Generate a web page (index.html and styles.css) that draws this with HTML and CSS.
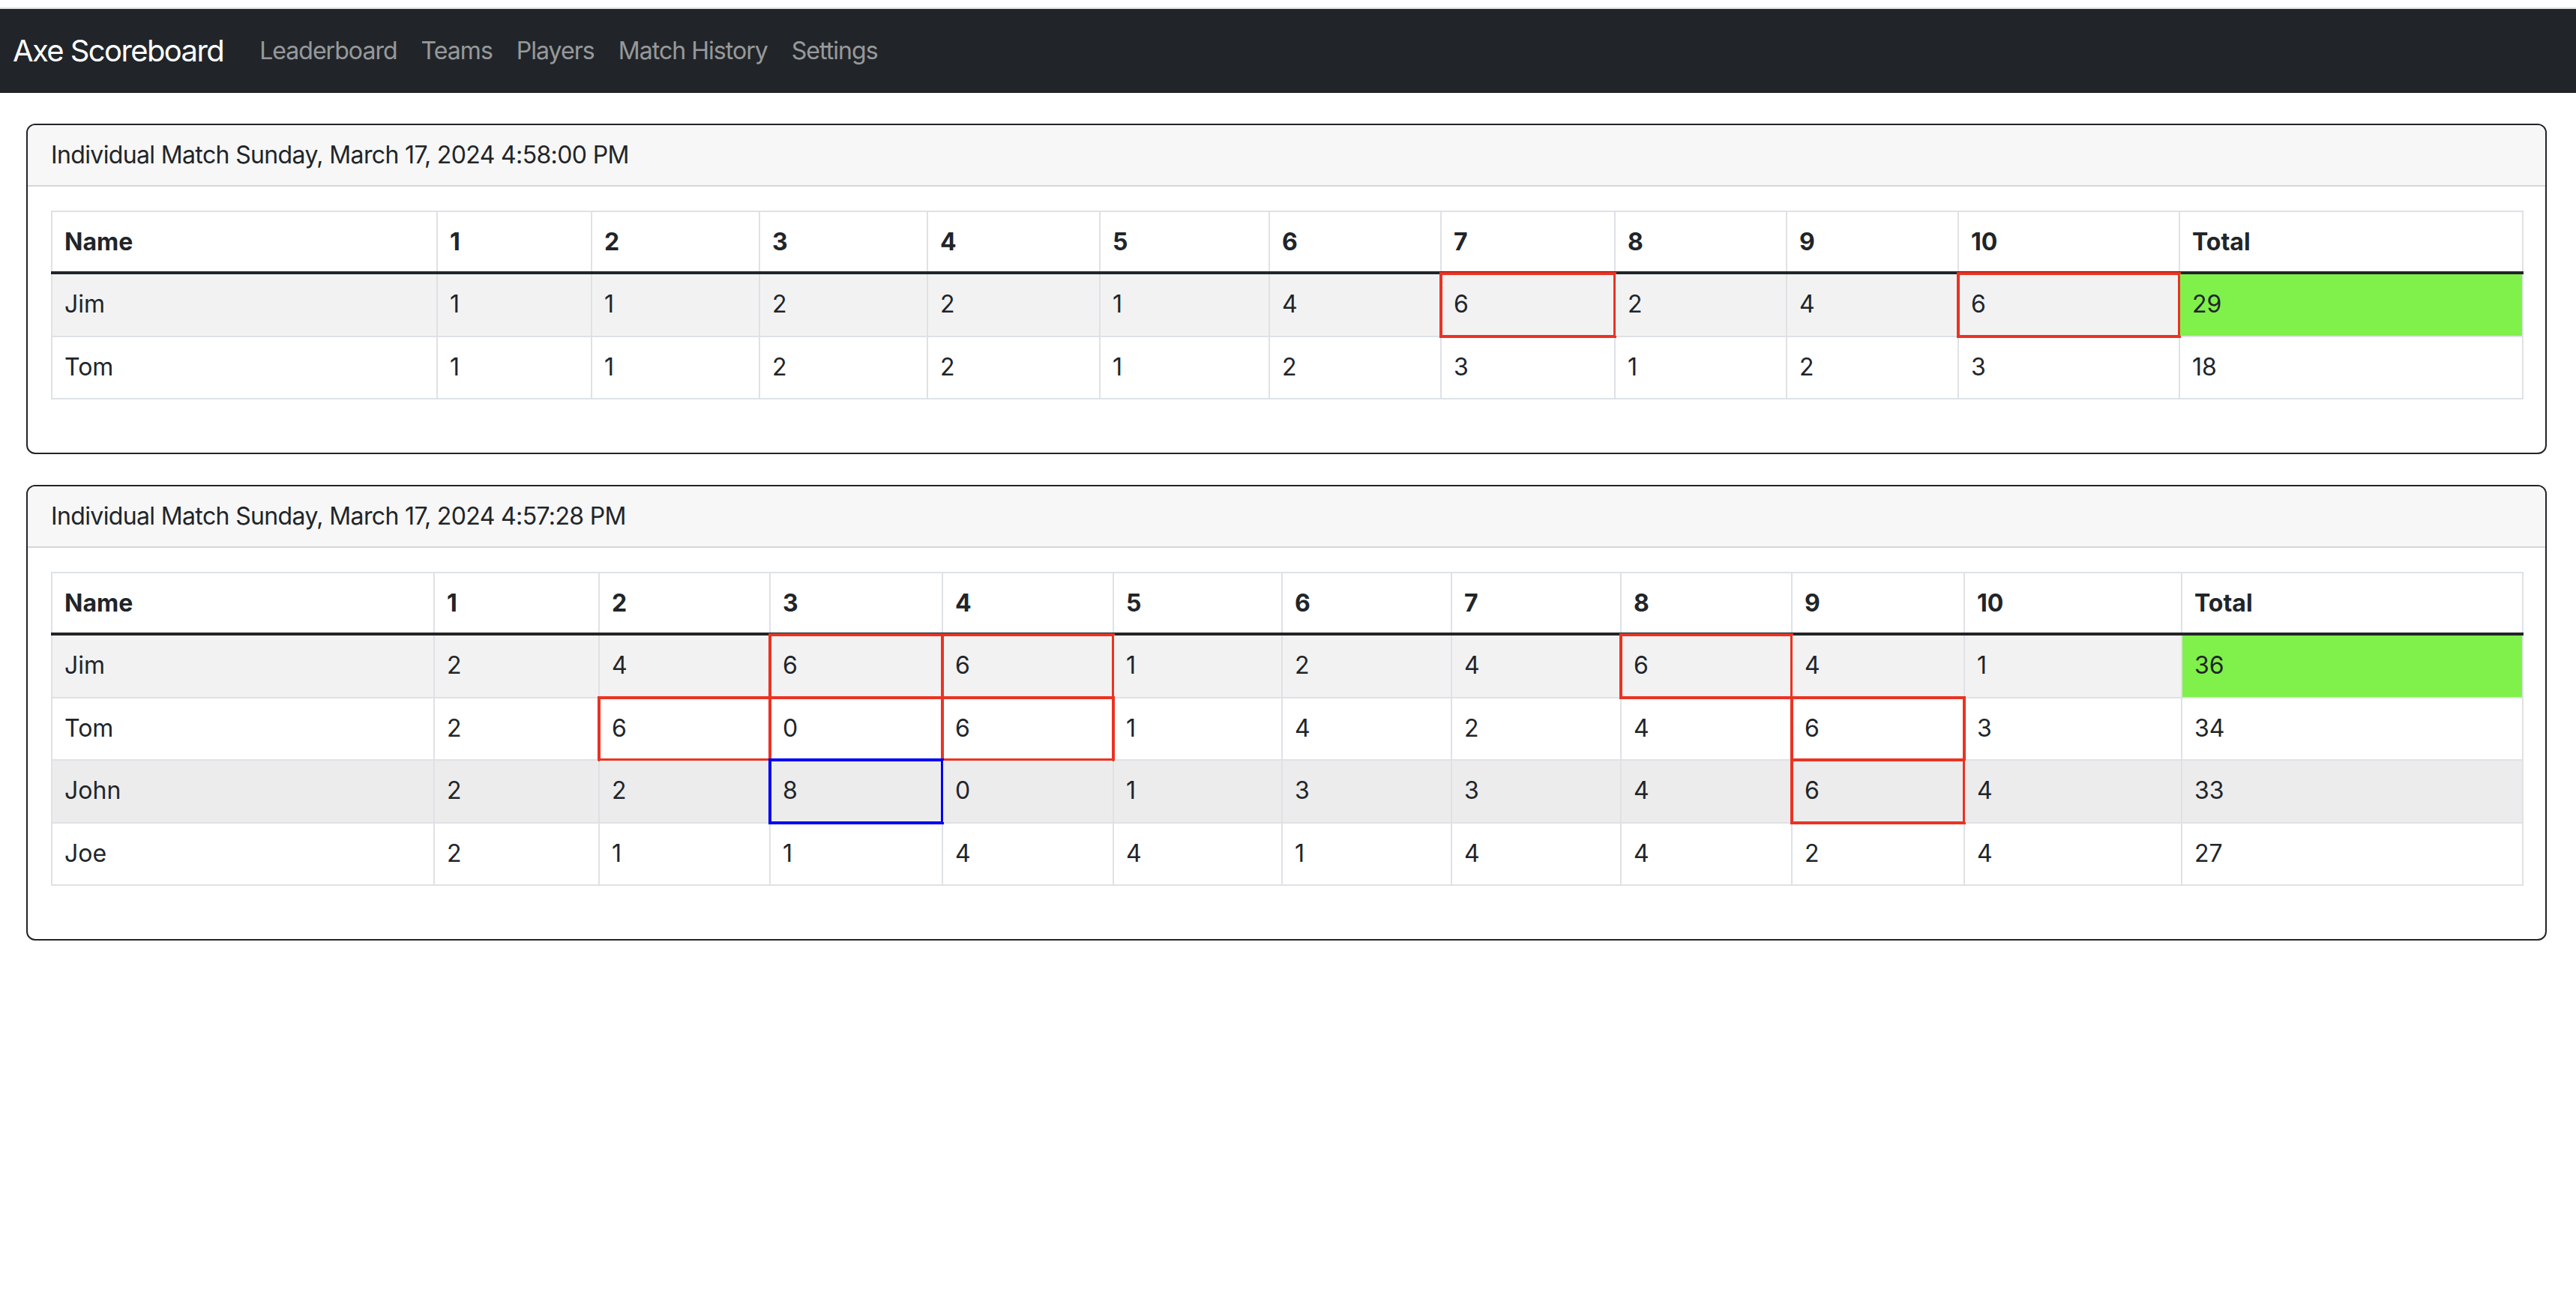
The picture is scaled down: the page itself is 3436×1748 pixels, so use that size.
FILE: index.html
```html
<!DOCTYPE html>
<html lang="en">
<head>
<meta charset="utf-8">
<title>Axe Scoreboard</title>
<link rel="stylesheet" href="styles.css">
</head>
<body>
<nav class="navbar">
  <a class="brand" href="#">Axe Scoreboard</a>
  <ul class="nav">
    <li><a href="#">Leaderboard</a></li>
    <li><a href="#">Teams</a></li>
    <li><a href="#">Players</a></li>
    <li><a href="#">Match History</a></li>
    <li><a href="#">Settings</a></li>
  </ul>
</nav>

<main class="content">
  <section class="card">
    <div class="card-header">Individual Match Sunday, March 17, 2024 4:58:00 PM</div>
    <div class="card-body">
      <table class="score t1">
        <colgroup>
          <col class="c0"><col class="c1"><col class="c2"><col class="c3"><col class="c4"><col class="c5"><col class="c6"><col class="c7"><col class="c8"><col class="c9"><col class="c10"><col class="c11">
        </colgroup>
        <thead>
          <tr><th>Name</th><th>1</th><th>2</th><th>3</th><th>4</th><th>5</th><th>6</th><th>7</th><th>8</th><th>9</th><th>10</th><th>Total</th></tr>
        </thead>
        <tbody>
          <tr class="striped"><td>Jim</td><td>1</td><td>1</td><td>2</td><td>2</td><td>1</td><td>4</td><td class="hit">6</td><td>2</td><td>4</td><td class="hit">6</td><td class="winner">29</td></tr>
          <tr><td>Tom</td><td>1</td><td>1</td><td>2</td><td>2</td><td>1</td><td>2</td><td>3</td><td>1</td><td>2</td><td>3</td><td>18</td></tr>
        </tbody>
      </table>
    </div>
  </section>

  <section class="card">
    <div class="card-header">Individual Match Sunday, March 17, 2024 4:57:28 PM</div>
    <div class="card-body">
      <table class="score t2">
        <colgroup>
          <col class="c0"><col class="c1"><col class="c2"><col class="c3"><col class="c4"><col class="c5"><col class="c6"><col class="c7"><col class="c8"><col class="c9"><col class="c10"><col class="c11">
        </colgroup>
        <thead>
          <tr><th>Name</th><th>1</th><th>2</th><th>3</th><th>4</th><th>5</th><th>6</th><th>7</th><th>8</th><th>9</th><th>10</th><th>Total</th></tr>
        </thead>
        <tbody>
          <tr class="striped"><td>Jim</td><td>2</td><td>4</td><td class="hit">6</td><td class="hit">6</td><td>1</td><td>2</td><td>4</td><td class="hit">6</td><td>4</td><td>1</td><td class="winner">36</td></tr>
          <tr><td>Tom</td><td>2</td><td class="hit">6</td><td>0</td><td class="hit">6</td><td>1</td><td>4</td><td>2</td><td>4</td><td class="hit">6</td><td>3</td><td>34</td></tr>
          <tr class="hovered"><td>John</td><td>2</td><td>2</td><td class="kill">8</td><td>0</td><td>1</td><td>3</td><td>3</td><td>4</td><td class="hit">6</td><td>4</td><td>33</td></tr>
          <tr><td>Joe</td><td>2</td><td>1</td><td>1</td><td>4</td><td>4</td><td>1</td><td>4</td><td>4</td><td>2</td><td>4</td><td>27</td></tr>
        </tbody>
      </table>
    </div>
  </section>
</main>
</body>
</html>
```

FILE: styles.css
```css
* { box-sizing: border-box; }

html, body {
  margin: 0;
  padding: 0;
  background: #ffffff;
}

body {
  padding-top: 10px;
  font-family: "Inter", "Noto Sans", "Liberation Sans", sans-serif;
  font-size: 32px;
  line-height: 48px;
  color: #212529;
}

/* ---------- navbar ---------- */
.navbar {
  display: flex;
  align-items: center;
  height: 114px;
  padding-left: 17px;
  background: #212529;
  border-top: 2px solid #dcdcdc;
}

.brand {
  font-size: 40px;
  line-height: 60px;
  letter-spacing: -0.04em;
  color: #ffffff;
  text-decoration: none;
  margin-right: 32px;
}

.nav {
  display: flex;
  list-style: none;
  margin: 0;
  padding: 0;
}

.nav a {
  display: block;
  padding: 16px;
  font-size: 32px;
  line-height: 48px;
  letter-spacing: -0.03em;
  color: rgba(255, 255, 255, 0.55);
  text-decoration: none;
}

/* ---------- cards ---------- */
.content {
  padding: 41px 39px 0 35px;
  display: flex;
  flex-direction: column;
  gap: 41px;
}

.card {
  border: 2px solid #212529;
  border-radius: 12px;
  overflow: hidden;
  background: #fff;
}

.card-header {
  padding: 16px 31px;
  letter-spacing: -0.02em;
  background: #f7f7f7;
  border-bottom: 2px solid #d6d6d6;
}

.card-body {
  padding: 32px 31px 32px 31px;
}

/* ---------- tables ---------- */
.score {
  width: 100%;
  table-layout: fixed;
  border-collapse: collapse;
  margin-bottom: 39px;
  border: 2px solid #dee2e6;
}

.score th,
.score td {
  position: relative;
  text-align: left;
  vertical-align: top;
  border: 2px solid #dee2e6;
  padding: 16px 16px 17.5px;
  white-space: nowrap;
}

.score th {
  font-weight: 700;
  padding: 16px 16px 15px;
}

.score thead th {
  border-bottom: 4px solid #212529;
}

.score tr.striped td { background: #f2f2f2; }
.score tr.hovered td { background: #ececec; }
.score td.winner,
.score tr.striped td.winner { background: #80f04b; }

.score td.hit::after,
.score td.kill::after {
  content: "";
  position: absolute;
  top: -3px;
  left: -3px;
  right: -3px;
  bottom: -3px;
  border: 4px solid #ea3323;
  pointer-events: none;
}

.score td.kill::after {
  border-color: #0000f5;
}

/* column widths: table 1 */
.t1 .c0 { width: 514px; }
.t1 .c1 { width: 206px; }
.t1 .c2 { width: 224px; }
.t1 .c3 { width: 224px; }
.t1 .c4 { width: 230px; }
.t1 .c5 { width: 226px; }
.t1 .c6 { width: 229px; }
.t1 .c7 { width: 232px; }
.t1 .c8 { width: 229px; }
.t1 .c9 { width: 229px; }
.t1 .c10 { width: 295px; }
.t1 .c11 { width: 458px; }

/* column widths: table 2 */
.t2 .c0 { width: 510px; }
.t2 .c1 { width: 220px; }
.t2 .c2 { width: 228px; }
.t2 .c3 { width: 230px; }
.t2 .c4 { width: 228px; }
.t2 .c5 { width: 225px; }
.t2 .c6 { width: 226px; }
.t2 .c7 { width: 226px; }
.t2 .c8 { width: 228px; }
.t2 .c9 { width: 230px; }
.t2 .c10 { width: 290px; }
.t2 .c11 { width: 455px; }
```
